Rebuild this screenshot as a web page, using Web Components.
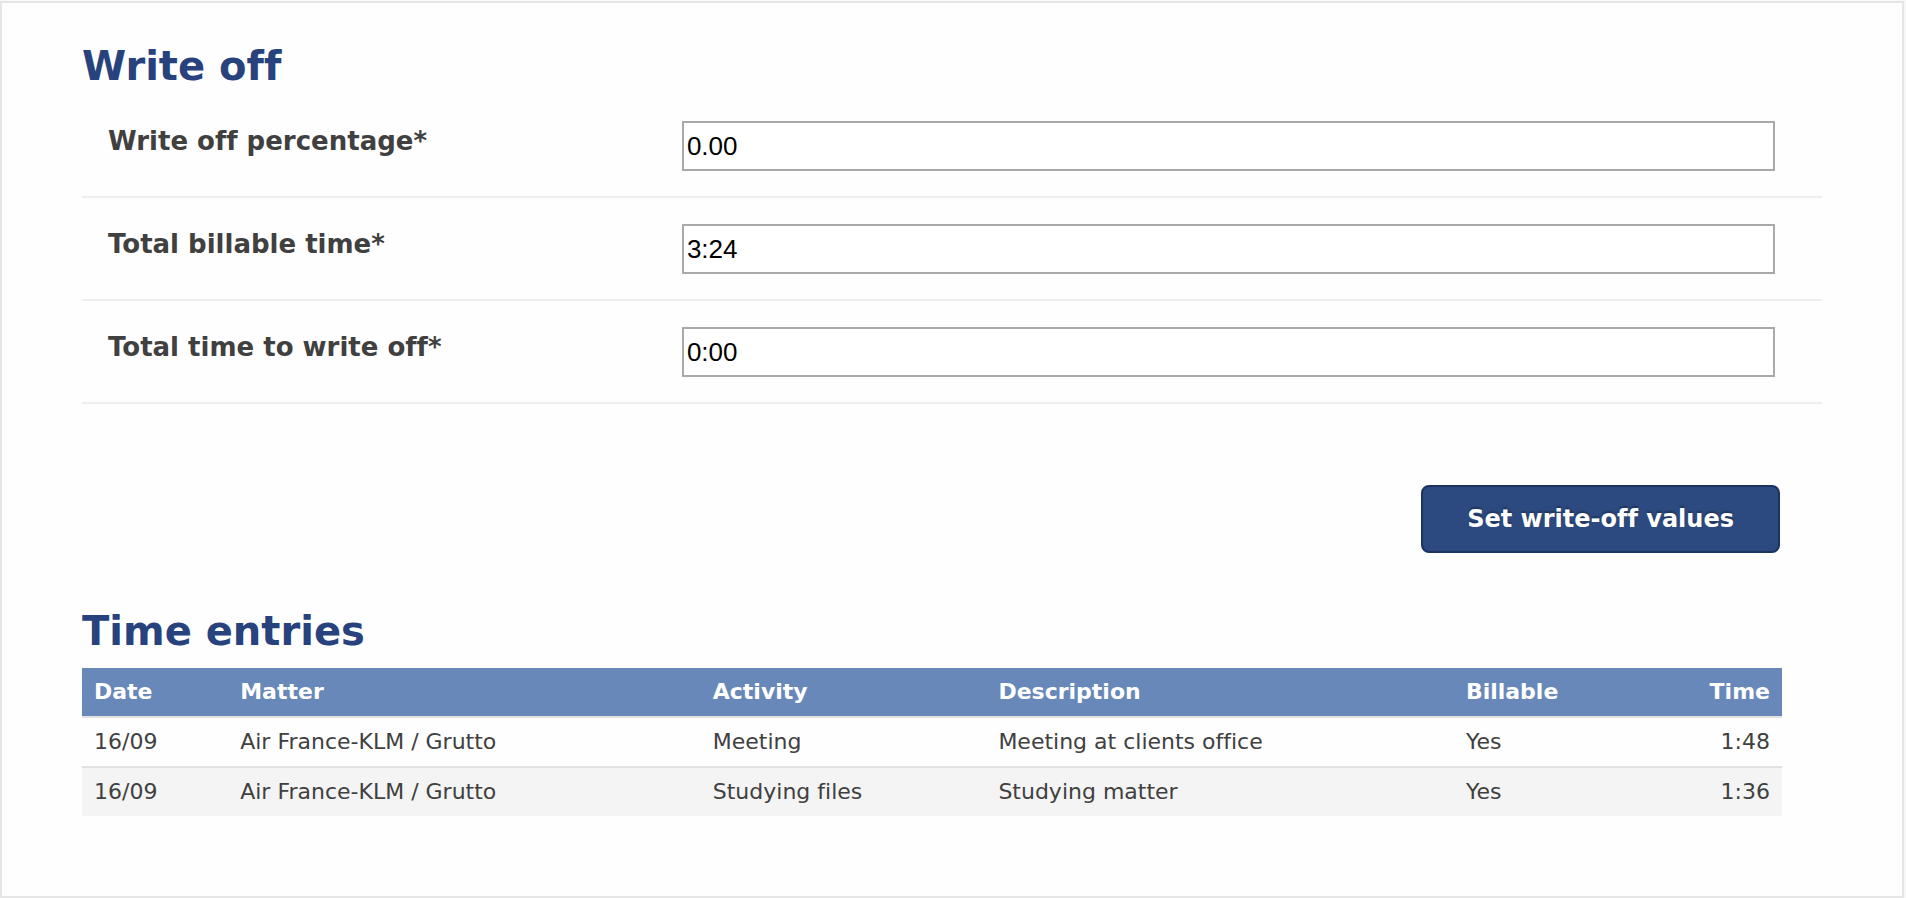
<!DOCTYPE html>
<html lang="en">
<head>
<meta charset="utf-8">
<title>Write off</title>
<style>
  html {
    min-height: 100%;
    display: flex;
    background: #f7f7f7;
  }

  body {
    flex: 1;
    display: flex;
    margin: 0;
    padding: 1px 2px 0 0;
    color: #404040;
    font-family: Verdana, "DejaVu Sans", sans-serif;
    font-size: 22px;
    font-variant-ligatures: none;
  }
</style>
</head>
<body>
<write-off-panel>
  <panel-section heading="Write off">
    <form-row label="Write off percentage*" name="percentage" value="0.00"></form-row>
    <form-row label="Total billable time*" name="billable" value="3:24"></form-row>
    <form-row label="Total time to write off*" name="writeoff" value="0:00"></form-row>
    <form-actions>
      <primary-button>Set write-off values</primary-button>
    </form-actions>
  </panel-section>
  <panel-section heading="Time entries">
    <time-entries></time-entries>
  </panel-section>
</write-off-panel>

<script>
class WriteOffPanel extends HTMLElement {
  constructor() {
    super();
    this.attachShadow({ mode: 'open' });
    this.shadowRoot.innerHTML = `
      <style>
        :host {
          display: flex;
          flex: 1;
          flex-direction: column;
          gap: 55px;
          box-sizing: border-box;
          padding: 40px 80px;
          border: 2px solid #e6e6e6;
          background: #fefefe;
        }
      </style>
      <slot></slot>
    `;
  }
}

class PanelSection extends HTMLElement {
  constructor() {
    super();
    this.attachShadow({ mode: 'open' });
    this.shadowRoot.innerHTML = `
      <style>
        :host {
          display: block;
        }

        h2 {
          margin: 0 0 14px;
          color: #27427c;
          font-size: 40px;
          line-height: 46px;
        }
      </style>
      <section>
        <h2></h2>
        <slot></slot>
      </section>
    `;
  }

  connectedCallback() {
    this.shadowRoot.querySelector('h2').textContent = this.getAttribute('heading');
  }
}

class FormRow extends HTMLElement {
  constructor() {
    super();
    this.attachShadow({ mode: 'open' });
    this.shadowRoot.innerHTML = `
      <style>
        :host {
          display: grid;
          grid-template-columns: 21fr 40fr;
          align-items: start;
          padding: 26px 47px 25px 26px;
          border-bottom: 2px solid #eee;
        }

        :host(:first-child) {
          padding-top: 18px;
        }

        label {
          font-size: 26px;
          font-weight: bold;
          line-height: 40px;
        }

        input {
          box-sizing: border-box;
          width: 100%;
          height: 50px;
          margin: 0;
          padding: 2px 3px;
          border: 2px solid #a9a9a9;
          border-radius: 0;
          background: #fff;
          color: #000;
          font-family: "Liberation Sans", Arial, sans-serif;
          font-size: 26px;
        }
      </style>
      <label for="field"></label>
      <input id="field" type="text">
    `;
  }

  connectedCallback() {
    const input = this.shadowRoot.querySelector('input');
    this.shadowRoot.querySelector('label').textContent = this.getAttribute('label');
    input.name = this.getAttribute('name');
    input.value = this.getAttribute('value');
  }
}

class FormActions extends HTMLElement {
  constructor() {
    super();
    this.attachShadow({ mode: 'open' });
    this.shadowRoot.innerHTML = `
      <style>
        :host {
          display: flex;
          justify-content: flex-end;
          padding: 81px 42px 0 0;
        }
      </style>
      <slot></slot>
    `;
  }
}

class PrimaryButton extends HTMLElement {
  constructor() {
    super();
    this.attachShadow({ mode: 'open' });
    this.shadowRoot.innerHTML = `
      <style>
        :host {
          display: block;
        }

        button {
          display: block;
          padding: 16px 44px;
          border: 2px solid #1b335f;
          border-radius: 8px;
          background: #2d4a80;
          color: #fff;
          font-family: inherit;
          font-size: 24px;
          font-variant-ligatures: inherit;
          font-weight: bold;
          line-height: 32px;
          text-shadow: 0 -2px 2px rgba(0, 0, 0, 0.3);
          cursor: pointer;
        }
      </style>
      <button type="button"><slot></slot></button>
    `;
  }
}

const entries = [
  { date: '16/09', matter: 'Air France-KLM / Grutto', activity: 'Meeting', description: 'Meeting at clients office', billable: 'Yes', time: '1:48' },
  { date: '16/09', matter: 'Air France-KLM / Grutto', activity: 'Studying files', description: 'Studying matter', billable: 'Yes', time: '1:36' }
];

class TimeEntries extends HTMLElement {
  constructor() {
    super();
    this.attachShadow({ mode: 'open' });
    this.shadowRoot.innerHTML = `
      <style>
        :host {
          display: block;
          padding-right: 40px;
        }

        table {
          width: 100%;
          table-layout: fixed;
          border-spacing: 0;
        }

        .date { width: 8.6%; }
        .matter { width: 27.8%; }
        .activity { width: 16.8%; }
        .description { width: 27.5%; }

        th, td {
          box-sizing: border-box;
          padding: 8px 12px;
          line-height: 32px;
          text-align: left;
          white-space: nowrap;
        }

        th {
          background: #6888b9;
          color: #fff;
        }

        td {
          border-top: 2px solid #e2e2e2;
        }

        tbody tr:nth-child(even) {
          background: #f4f4f4;
        }

        th:last-child, td:last-child {
          text-align: right;
        }
      </style>
      <table>
        <thead>
          <tr>
            <th class="date">Date</th>
            <th class="matter">Matter</th>
            <th class="activity">Activity</th>
            <th class="description">Description</th>
            <th>Billable</th>
            <th>Time</th>
          </tr>
        </thead>
        <tbody></tbody>
      </table>
    `;
  }

  connectedCallback() {
    const body = this.shadowRoot.querySelector('tbody');
    entries.forEach(entry => {
      const row = body.insertRow();
      Object.values(entry).forEach(text => {
        row.insertCell().textContent = text;
      });
    });
  }
}

customElements.define('write-off-panel', WriteOffPanel);
customElements.define('panel-section', PanelSection);
customElements.define('form-row', FormRow);
customElements.define('form-actions', FormActions);
customElements.define('primary-button', PrimaryButton);
customElements.define('time-entries', TimeEntries);
</script>
</body>
</html>
